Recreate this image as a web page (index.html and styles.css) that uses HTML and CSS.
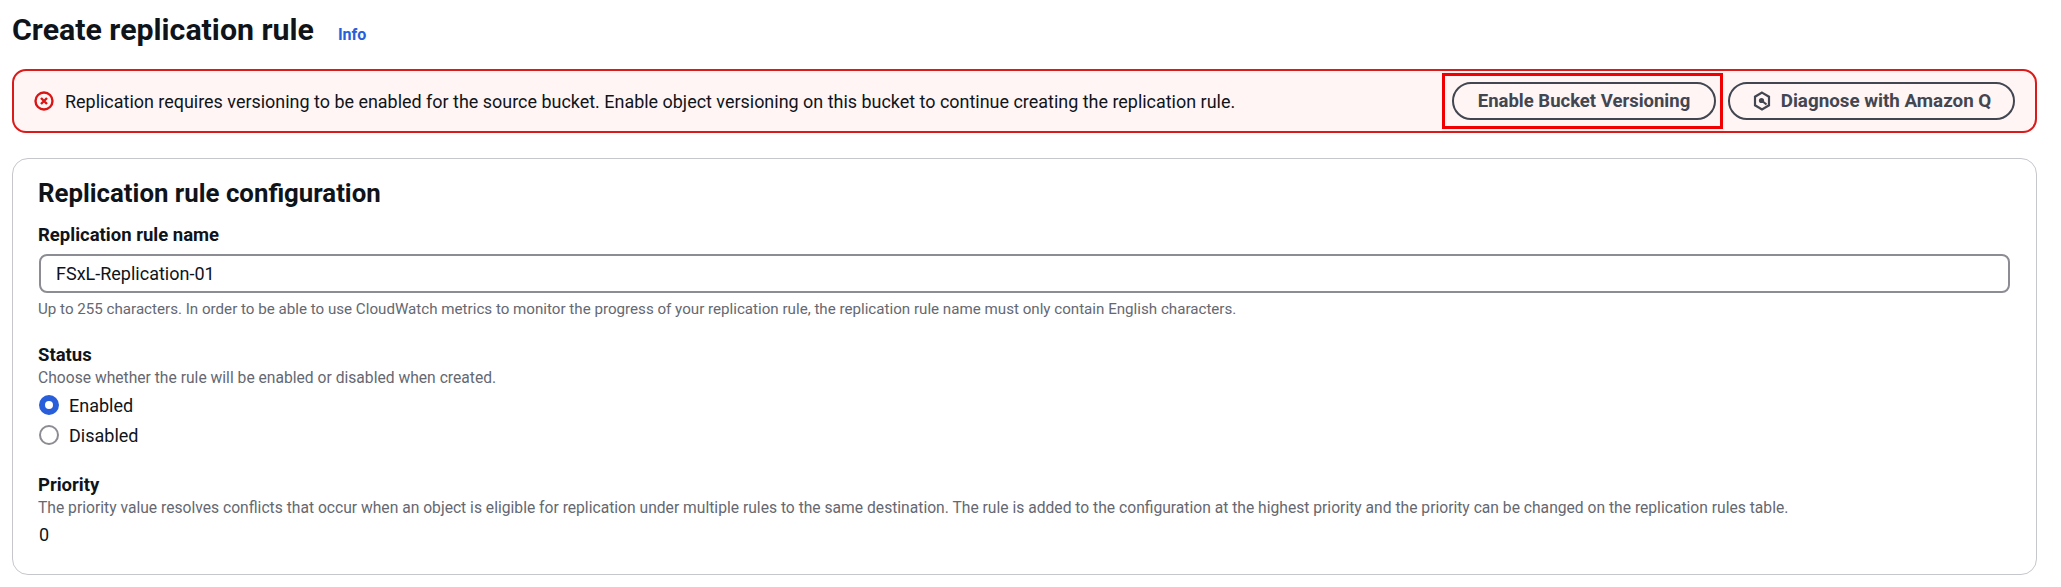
FILE: index.html
```html
<!doctype html>
<html>
<head>
    <meta charset="utf-8">
    <title>Create replication rule</title>
    <link rel="stylesheet" href="styles.css">
</head>
<body>
<section class="main">
    <div class="page-head">
        <h1>Create replication rule</h1>
        <a class="info" href="#">Info</a>
    </div>

    <div class="alert">
        <svg class="alert-icon" viewBox="0 0 20 20" width="20" height="20">
            <circle cx="10" cy="10" r="8.5" fill="none" stroke="#d91515" stroke-width="2.4"/>
            <path d="M7 7l6 6M13 7l-6 6" stroke="#d91515" stroke-width="2.4" fill="none"/>
        </svg>
        <div class="alert-text">Replication requires versioning to be enabled for the source bucket. Enable object versioning on this bucket to continue creating the replication rule.</div>
        <div class="alert-actions">
            <span class="highlight"><button class="btn btn-wide" type="button">Enable Bucket Versioning</button></span>
            <button class="btn btn-q" type="button">
                <svg viewBox="0 0 20 20" width="20" height="20">
                    <path d="M10 1.6l7 4.1v8.6l-7 4.1-7-4.1V5.700z" fill="none" stroke="#424650" stroke-width="2.200"/>
                    <circle cx="9.500" cy="9.500" r="2.600" fill="#424650"/>
                    <path d="M9.500 9.500l5 4" stroke="#424650" stroke-width="2.200"/>
                </svg>
                Diagnose with Amazon Q
            </button>
        </div>
    </div>

    <div class="card">
        <h2>Replication rule configuration</h2>

        <div class="field field-name">
            <label class="label" for="rule_name">Replication rule name</label>
            <input class="text-input" id="rule_name" type="text" value="FSxL-Replication-01"/>
            <div class="hint">Up to 255 characters. In order to be able to use CloudWatch metrics to monitor the progress of your replication rule, the replication rule name must only contain English characters.</div>
        </div>

        <div class="field field-status">
            <div class="label">Status</div>
            <div class="hint">Choose whether the rule will be enabled or disabled when created.</div>
            <label class="radio radio-first"><input type="radio" name="status" checked><span>Enabled</span></label>
            <label class="radio"><input type="radio" name="status"><span>Disabled</span></label>
        </div>

        <div class="field field-priority">
            <div class="label">Priority</div>
            <div class="hint">The priority value resolves conflicts that occur when an object is eligible for replication under multiple rules to the same destination. The rule is added to the configuration at the highest priority and the priority can be changed on the replication rules table.</div>
            <div class="value">0</div>
        </div>
    </div>
</section>
</body>
</html>
```

FILE: styles.css
```css
body {
    margin: 0;
    font-family: Roboto, "Noto Sans", Arial, sans-serif;
    background: #ffffff;
    color: #0f141a;
    font-size: 18px;
}

.main {
    padding: 13px 24px 0 12px;
}

.page-head {
    display: flex;
    align-items: baseline;
    height: 56px;
}

h1 {
    margin: 0;
    font-size: 30.300px;
    line-height: 34px;
    font-weight: 700;
}

.info {
    margin-left: 24px;
    font-size: 16px;
    font-weight: 700;
    color: #295eda;
    text-decoration: none;
}

.alert {
    display: flex;
    align-items: center;
    height: 64px;
    box-sizing: border-box;
    padding: 0 20px 0 20px;
    border: 2px solid #db1a1a;
    border-radius: 14px;
    background: #fff5f5;
}

.alert-icon {
    margin-right: 11px;
    flex: none;
}

.alert-text {
    flex: 1;
    font-size: 17.950px;
}

.alert-actions {
    display: flex;
    align-items: center;
    gap: 5px;
}

.highlight {
    display: flex;
    border: 3px solid #f00000;
    padding: 6px 4px 6px 7px;
}

.btn {
    display: flex;
    align-items: center;
    justify-content: center;
    gap: 9px;
    height: 38px;
    box-sizing: border-box;
    border: 2px solid #424650;
    border-radius: 20px;
    background: transparent;
    color: #424650;
    font-family: inherit;
    font-size: 18.500px;
    font-weight: 700;
}

.btn-wide {
    width: 264px;
}

.btn-q {
    width: 287px;
    font-size: 18.800px;
}

.card {
    margin-top: 25px;
    height: 417px;
    box-sizing: border-box;
    padding: 19px 26px 0 26px;
    border: 1px solid #c6c6cd;
    border-radius: 16px;
}

h2 {
    margin: 0 0 0 -1px;
    font-size: 25.800px;
    line-height: 30px;
    font-weight: 700;
}

.field-name {
    margin-top: 16px;
}

.field-status {
    margin-top: 25px;
}

.field-priority {
    margin-top: 24px;
}

.label {
    display: block;
    margin-left: -1px;
    font-size: 18.500px;
    line-height: 22px;
    font-weight: 700;
}

.text-input {
    display: block;
    width: 100%;
    height: 39px;
    box-sizing: border-box;
    margin-top: 8px;
    padding: 0 15px;
    border: 2px solid #8c8c94;
    border-radius: 8px;
    color: #0f141a;
    font-family: inherit;
    font-size: 18px;
}

.hint {
    margin-left: -1px;
    font-size: 15.650px;
    line-height: 20px;
    color: #656871;
}

.field-name .hint {
    margin-top: 6px;
    font-size: 15.150px;
}

.field-status .hint,
.field-priority .hint {
    margin-top: 2px;
}

.radio {
    display: flex;
    align-items: center;
    height: 30px;
}

.radio-first {
    margin-top: 2px;
}

.radio input {
    appearance: none;
    width: 20px;
    height: 20px;
    box-sizing: border-box;
    margin: 0 10px 0 0;
    border: 2px solid #8c8c94;
    border-radius: 50%;
}

.radio input:checked {
    border: 6px solid #295eda;
}

.value {
    margin-top: 5px;
    line-height: 24px;
}
```
